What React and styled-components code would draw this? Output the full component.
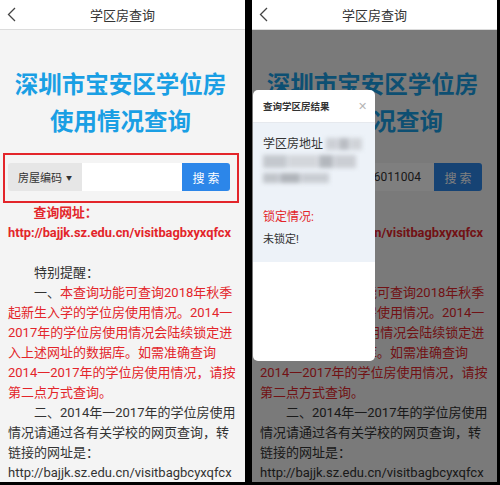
import React from "react";
import styled, { createGlobalStyle } from "styled-components";

const GlobalStyle = createGlobalStyle`
  html, body {
    margin: 0;
    padding: 0;
    background: #000;
  }
  * {
    box-sizing: border-box;
  }
`;

const FONT = `Roboto, "Noto Sans CJK SC", "Noto Sans", sans-serif`;
const RED = "#e3252a";

const Screen = styled.div`
  width: 500px;
  height: 485px;
  display: flex;
  gap: 7px;
  background: #000;
  font-family: ${FONT};
`;

const Phone = styled.div`
  position: relative;
  width: 245px;
  height: 482px;
  overflow: hidden;
  background: #f4f4f4;
  display: flex;
  flex-direction: column;
`;

const Header = styled.div`
  height: 30px;
  flex-shrink: 0;
  background: #fff;
  border-bottom: 1px solid #dcdcdc;
  display: grid;
  grid-template-columns: 30px 1fr 30px;
  align-items: center;
`;

const Back = styled.div`
  display: flex;
  align-items: center;
  padding-left: 7px;
`;

const HeaderTitle = styled.div`
  text-align: center;
  font-size: 13px;
  color: #333;
`;

const Body = styled.div`
  flex: 1;
  padding: 0 12px 0 8px;
`;

const Title = styled.div`
  margin-top: 37px;
  text-align: center;
  font-size: 23.5px;
  font-weight: 700;
  line-height: 37px;
  color: #1a9fe4;
  white-space: nowrap;
`;

const SearchFrame = styled.div`
  width: 236px;
  margin: 12px 0 0 -5px;
  padding: 8px 7px 10px 3px;
  border: 2px solid ${(p) => (p.$marked ? RED : "transparent")};
`;

const SearchBar = styled.div`
  display: flex;
  height: 28px;
  width: 222px;
  border-radius: 3px;
  overflow: hidden;
`;

const Select = styled.div`
  width: 74px;
  background: #e6e6e6;
  display: flex;
  align-items: center;
  justify-content: center;
  gap: 4px;
  font-size: 11px;
  color: #333;
`;

const Caret = styled.span`
  font-size: 6px;
`;

const Input = styled.div`
  flex: 1;
  background: #fff;
  display: flex;
  align-items: center;
  padding-left: 6px;
  font-size: 12px;
  color: #333;
`;

const Button = styled.div`
  width: 48px;
  background: #2c86e9;
  color: #fff;
  font-size: 12px;
  letter-spacing: 3px;
  display: flex;
  align-items: center;
  justify-content: center;
  padding-left: 3px;
`;

const Text = styled.div`
  font-size: 13px;
  line-height: 20px;
  color: #333;
`;

const Line = styled.div`
  white-space: nowrap;
  padding-left: ${(p) => (p.$indent ? "2em" : "0")};
  color: ${(p) => (p.$red ? RED : "inherit")};
  font-weight: ${(p) => (p.$bold ? 700 : 400)};
  font-size: ${(p) => (p.$bold ? "12.8px" : "13px")};
  min-height: 20px;
`;

const Red = styled.span`
  color: ${RED};
`;

const Overlay = styled.div`
  position: absolute;
  top: 30px;
  left: 0;
  right: 0;
  bottom: 0;
  background: rgba(0, 0, 0, 0.5);
`;

const Modal = styled.div`
  position: absolute;
  top: 90px;
  left: 1px;
  width: 122px;
  height: 271px;
  background: #fff;
  border-radius: 5px;
  overflow: hidden;
  display: flex;
  flex-direction: column;
`;

const ModalHead = styled.div`
  height: 33px;
  display: flex;
  align-items: center;
  justify-content: space-between;
  padding: 0 8px 0 10px;
  border-bottom: 1px solid #e6e9ee;
`;

const ModalTitle = styled.div`
  font-size: 9.5px;
  font-weight: 700;
  color: #333;
`;

const Close = styled.div`
  font-size: 11px;
  color: #b5b5b5;
`;

const ModalBody = styled.div`
  height: 139px;
  background: #edf2f8;
  padding: 13px 10px 0;
`;

const Field = styled.div`
  display: flex;
  align-items: center;
  gap: 3px;
  font-size: 12px;
  line-height: 16px;
  color: #333;
  white-space: nowrap;
`;

const BlurRow = styled.div`
  display: flex;
  gap: ${(p) => p.$gap || 0}px;
  margin-top: ${(p) => p.$top || 0}px;
  filter: blur(2px);
`;

const Patch = styled.span`
  display: block;
  width: ${(p) => p.$w}px;
  height: ${(p) => p.$h || 12}px;
  background: ${(p) => p.$c};
`;

const LockLabel = styled.div`
  margin-top: 24px;
  font-size: 12px;
  color: ${RED};
`;

const LockValue = styled.div`
  margin-top: 6px;
  font-size: 11px;
  color: #333;
`;

function BackIcon() {
  return (
    <svg width="9" height="15" viewBox="0 0 9 15">
      <polyline
        points="8,1 1.5,7.5 8,14"
        fill="none"
        stroke="#444"
        strokeWidth="1.3"
      />
    </svg>
  );
}

function PageContent({ marked, value }) {
  return (
    <>
      <Header>
        <Back>
          <BackIcon />
        </Back>
        <HeaderTitle>学区房查询</HeaderTitle>
        <span />
      </Header>
      <Body>
        <Title>
          深圳市宝安区学位房
          <br />
          使用情况查询
        </Title>
        <SearchFrame $marked={marked}>
          <SearchBar>
            <Select>
              房屋编码<Caret>▼</Caret>
            </Select>
            <Input>{value}</Input>
            <Button>搜索</Button>
          </SearchBar>
        </SearchFrame>
        <Text>
          <Line $indent $red $bold>
            查询网址：
          </Line>
          <Line $red $bold>
            http://bajjk.sz.edu.cn/visitbagbxyxqfcx
          </Line>
          <Line />
          <Line $indent>特别提醒：</Line>
          <Line $indent>
            一、<Red>本查询功能可查询2018年秋季</Red>
          </Line>
          <Line $red>起新生入学的学位房使用情况。2014一</Line>
          <Line $red>2017年的学位房使用情况会陆续锁定进</Line>
          <Line $red>入上述网址的数据库。如需准确查询</Line>
          <Line $red>2014一2017年的学位房使用情况，请按</Line>
          <Line $red>第二点方式查询。</Line>
          <Line $indent>二、2014年一2017年的学位房使用</Line>
          <Line>情况请通过各有关学校的网页查询，转</Line>
          <Line>链接的网址是：</Line>
          <Line>http://bajjk.sz.edu.cn/visitbagbcyxqfcx</Line>
        </Text>
      </Body>
    </>
  );
}

export default function App() {
  return (
    <>
      <GlobalStyle />
      <Screen>
        <Phone>
          <PageContent marked value="" />
        </Phone>
        <Phone>
          <PageContent value="440396011004" />
          <Overlay />
          <Modal>
            <ModalHead>
              <ModalTitle>查询学区房结果</ModalTitle>
              <Close>✕</Close>
            </ModalHead>
            <ModalBody>
              <Field>
                学区房地址
                <BlurRow $gap={1}>
                  <Patch $w={12} $c="#cdd0d6" />
                  <Patch $w={10} $c="#b9bcc2" />
                  <Patch $w={12} $c="#d0d3d8" />
                </BlurRow>
              </Field>
              <BlurRow $top={3} $gap={1}>
                <Patch $w={24} $h={13} $c="#c4c8ce" />
                <Patch $w={30} $h={13} $c="#d3d6db" />
                <Patch $w={14} $h={13} $c="#b3b7bd" />
                <Patch $w={22} $h={13} $c="#cbced4" />
              </BlurRow>
              <BlurRow $top={5} $gap={1}>
                <Patch $w={16} $h={10} $c="#c0c4ca" />
                <Patch $w={20} $h={10} $c="#b0b4ba" />
                <Patch $w={28} $h={10} $c="#c9cdd3" />
              </BlurRow>
              <LockLabel>锁定情况:</LockLabel>
              <LockValue>未锁定!</LockValue>
            </ModalBody>
          </Modal>
        </Phone>
      </Screen>
    </>
  );
}
